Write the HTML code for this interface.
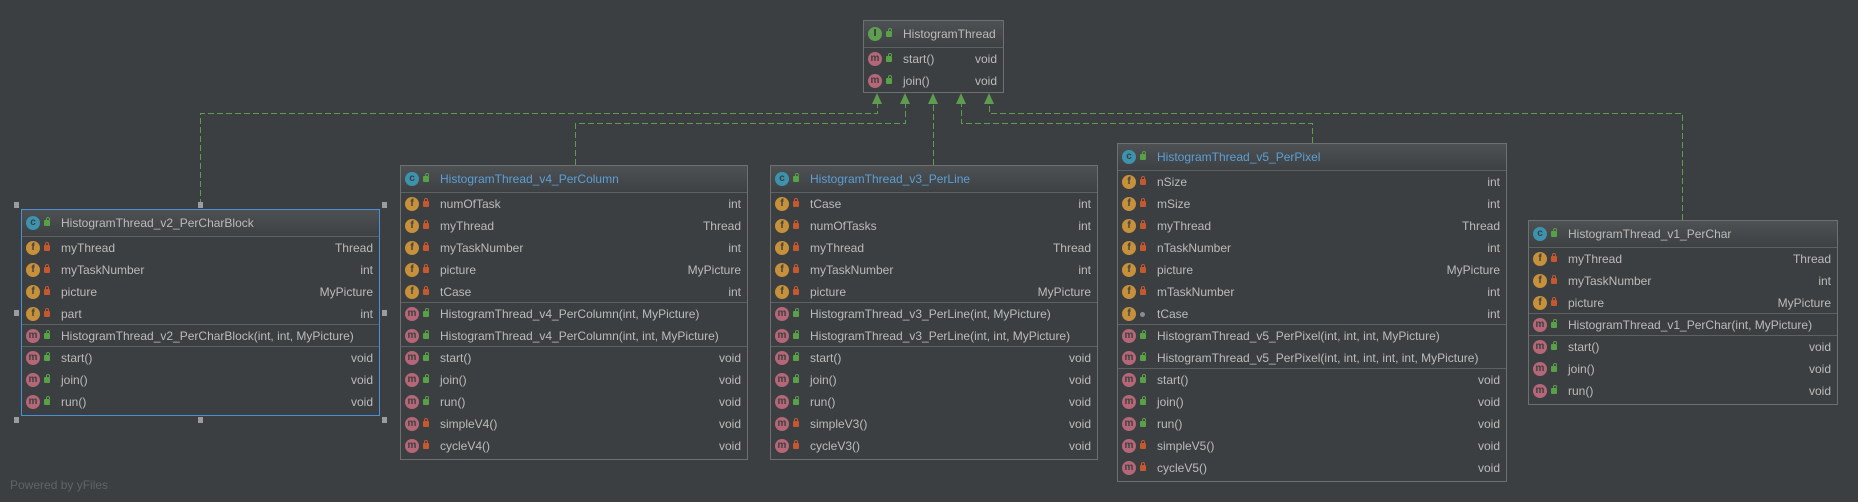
<!DOCTYPE html>
<html><head><meta charset="utf-8"><style>
*{margin:0;padding:0;box-sizing:border-box}
body{width:1858px;height:502px;background:#3c3f41;position:relative;overflow:hidden;font-family:"Liberation Sans",sans-serif;font-size:12px;color:#bbbbbb}
.b{position:absolute;border:1px solid #6d6f71;background:#3c3f41}
.b.sel{border-color:#4b8fd6}
.h{height:27px;line-height:26px;background:linear-gradient(#4e5153,#3e4143);border-bottom:1px solid #5e6062;position:relative;padding-left:39px;white-space:nowrap}
.h.bl{color:#5a9fd8}
.s{border-bottom:1px solid #5e6062}
.r{height:22px;line-height:22px;position:relative;padding-left:39px;padding-right:6px;white-space:nowrap}
.r span{position:absolute;right:6px;top:0}
.ic{position:absolute;left:4px;top:4px;width:14px;height:14px;border-radius:50%;font-size:10px;line-height:14px;text-align:center;color:#3c3f41;font-weight:bold}
.h .ic{top:6px;left:4px}
.f{background:#c6913a}.m{background:#b56777}.c{background:#3d93ad}.i{background:#5f9d52;color:#2b2b2b}
.lk{position:absolute;left:22px;top:8px;width:6px;height:6px;border-radius:1px}
.h .lk{top:10px}
.lk::before{content:"";position:absolute;left:1px;top:-3px;width:2px;height:2px;border:1px solid;border-bottom:none;border-radius:2px 2px 0 0}
.pu{background:#58a146}.pu::before{border-color:#58a146;left:2px}
.pr{background:#c5582f}.pr::before{border-color:#c5582f}
.pk{background:#8a8d90;border-radius:50%;width:5px;height:5px;top:9px}.pk::before{display:none}
.hd{position:absolute;width:5px;height:6px;background:#9a9c9e}
.t{position:absolute;background:none;width:0;height:0;border-left:5px solid transparent;border-right:5px solid transparent;border-bottom:11px solid #5f9c4f}
</style></head><body>
<svg width="1858" height="502" style="position:absolute;left:0;top:0">
<g stroke="#5f9c4f" stroke-width="1" fill="none" stroke-dasharray="6,3">
<path d="M200.5 205 V113.5 H877.5 V104"/>
<path d="M575.5 165 V123.5 H905.5 V104"/>
<path d="M933.5 165 V104"/>
<path d="M1312.5 143 V123.5 H961.5 V104"/>
<path d="M1682.5 220 V113.5 H989.5 V104"/>
</g></svg>
<div class="t" style="left:872px;top:93px"></div>
<div class="t" style="left:900px;top:93px"></div>
<div class="t" style="left:928px;top:93px"></div>
<div class="t" style="left:956px;top:93px"></div>
<div class="t" style="left:984px;top:93px"></div>

<div class="b" style="left:863px;top:20px;width:141px;height:73px">
<div class="h"><b class="ic i">I</b><i class="lk pu"></i>HistogramThread</div>
<div class="r"><b class="ic m">m</b><i class="lk pu"></i>start()<span>void</span></div>
<div class="r"><b class="ic m">m</b><i class="lk pu"></i>join()<span>void</span></div>
</div>

<div class="b sel" style="left:21px;top:209px;width:359px;height:207px">
<div class="h"><b class="ic c">c</b><i class="lk pu"></i>HistogramThread_v2_PerCharBlock</div>
<div class="r"><b class="ic f">f</b><i class="lk pr"></i>myThread<span>Thread</span></div>
<div class="r"><b class="ic f">f</b><i class="lk pr"></i>myTaskNumber<span>int</span></div>
<div class="r"><b class="ic f">f</b><i class="lk pr"></i>picture<span>MyPicture</span></div>
<div class="r s"><b class="ic f">f</b><i class="lk pr"></i>part<span>int</span></div>
<div class="r s"><b class="ic m">m</b><i class="lk pu"></i>HistogramThread_v2_PerCharBlock(int, int, MyPicture)</div>
<div class="r"><b class="ic m">m</b><i class="lk pu"></i>start()<span>void</span></div>
<div class="r"><b class="ic m">m</b><i class="lk pu"></i>join()<span>void</span></div>
<div class="r"><b class="ic m">m</b><i class="lk pu"></i>run()<span>void</span></div>
</div>
<div class="hd" style="left:14px;top:202px"></div><div class="hd" style="left:198px;top:202px"></div><div class="hd" style="left:382px;top:202px"></div>
<div class="hd" style="left:14px;top:310px"></div><div class="hd" style="left:382px;top:310px"></div>
<div class="hd" style="left:14px;top:417px"></div><div class="hd" style="left:198px;top:417px"></div><div class="hd" style="left:382px;top:417px"></div>

<div class="b" style="left:400px;top:165px;width:348px;height:295px">
<div class="h bl"><b class="ic c">c</b><i class="lk pu"></i>HistogramThread_v4_PerColumn</div>
<div class="r"><b class="ic f">f</b><i class="lk pr"></i>numOfTask<span>int</span></div>
<div class="r"><b class="ic f">f</b><i class="lk pr"></i>myThread<span>Thread</span></div>
<div class="r"><b class="ic f">f</b><i class="lk pr"></i>myTaskNumber<span>int</span></div>
<div class="r"><b class="ic f">f</b><i class="lk pr"></i>picture<span>MyPicture</span></div>
<div class="r s"><b class="ic f">f</b><i class="lk pr"></i>tCase<span>int</span></div>
<div class="r"><b class="ic m">m</b><i class="lk pu"></i>HistogramThread_v4_PerColumn(int, MyPicture)</div>
<div class="r s"><b class="ic m">m</b><i class="lk pu"></i>HistogramThread_v4_PerColumn(int, int, MyPicture)</div>
<div class="r"><b class="ic m">m</b><i class="lk pu"></i>start()<span>void</span></div>
<div class="r"><b class="ic m">m</b><i class="lk pu"></i>join()<span>void</span></div>
<div class="r"><b class="ic m">m</b><i class="lk pu"></i>run()<span>void</span></div>
<div class="r"><b class="ic m">m</b><i class="lk pr"></i>simpleV4()<span>void</span></div>
<div class="r"><b class="ic m">m</b><i class="lk pr"></i>cycleV4()<span>void</span></div>
</div>

<div class="b" style="left:770px;top:165px;width:328px;height:295px">
<div class="h bl"><b class="ic c">c</b><i class="lk pu"></i>HistogramThread_v3_PerLine</div>
<div class="r"><b class="ic f">f</b><i class="lk pr"></i>tCase<span>int</span></div>
<div class="r"><b class="ic f">f</b><i class="lk pr"></i>numOfTasks<span>int</span></div>
<div class="r"><b class="ic f">f</b><i class="lk pr"></i>myThread<span>Thread</span></div>
<div class="r"><b class="ic f">f</b><i class="lk pr"></i>myTaskNumber<span>int</span></div>
<div class="r s"><b class="ic f">f</b><i class="lk pr"></i>picture<span>MyPicture</span></div>
<div class="r"><b class="ic m">m</b><i class="lk pu"></i>HistogramThread_v3_PerLine(int, MyPicture)</div>
<div class="r s"><b class="ic m">m</b><i class="lk pu"></i>HistogramThread_v3_PerLine(int, int, MyPicture)</div>
<div class="r"><b class="ic m">m</b><i class="lk pu"></i>start()<span>void</span></div>
<div class="r"><b class="ic m">m</b><i class="lk pu"></i>join()<span>void</span></div>
<div class="r"><b class="ic m">m</b><i class="lk pu"></i>run()<span>void</span></div>
<div class="r"><b class="ic m">m</b><i class="lk pr"></i>simpleV3()<span>void</span></div>
<div class="r"><b class="ic m">m</b><i class="lk pr"></i>cycleV3()<span>void</span></div>
</div>

<div class="b" style="left:1117px;top:143px;width:390px;height:339px">
<div class="h bl"><b class="ic c">c</b><i class="lk pu"></i>HistogramThread_v5_PerPixel</div>
<div class="r"><b class="ic f">f</b><i class="lk pr"></i>nSize<span>int</span></div>
<div class="r"><b class="ic f">f</b><i class="lk pr"></i>mSize<span>int</span></div>
<div class="r"><b class="ic f">f</b><i class="lk pr"></i>myThread<span>Thread</span></div>
<div class="r"><b class="ic f">f</b><i class="lk pr"></i>nTaskNumber<span>int</span></div>
<div class="r"><b class="ic f">f</b><i class="lk pr"></i>picture<span>MyPicture</span></div>
<div class="r"><b class="ic f">f</b><i class="lk pr"></i>mTaskNumber<span>int</span></div>
<div class="r s"><b class="ic f">f</b><i class="lk pk"></i>tCase<span>int</span></div>
<div class="r"><b class="ic m">m</b><i class="lk pu"></i>HistogramThread_v5_PerPixel(int, int, int, MyPicture)</div>
<div class="r s"><b class="ic m">m</b><i class="lk pu"></i>HistogramThread_v5_PerPixel(int, int, int, int, int, MyPicture)</div>
<div class="r"><b class="ic m">m</b><i class="lk pu"></i>start()<span>void</span></div>
<div class="r"><b class="ic m">m</b><i class="lk pu"></i>join()<span>void</span></div>
<div class="r"><b class="ic m">m</b><i class="lk pu"></i>run()<span>void</span></div>
<div class="r"><b class="ic m">m</b><i class="lk pr"></i>simpleV5()<span>void</span></div>
<div class="r"><b class="ic m">m</b><i class="lk pr"></i>cycleV5()<span>void</span></div>
</div>

<div class="b" style="left:1528px;top:220px;width:310px;height:185px">
<div class="h"><b class="ic c">c</b><i class="lk pu"></i>HistogramThread_v1_PerChar</div>
<div class="r"><b class="ic f">f</b><i class="lk pr"></i>myThread<span>Thread</span></div>
<div class="r"><b class="ic f">f</b><i class="lk pr"></i>myTaskNumber<span>int</span></div>
<div class="r s"><b class="ic f">f</b><i class="lk pr"></i>picture<span>MyPicture</span></div>
<div class="r s"><b class="ic m">m</b><i class="lk pu"></i>HistogramThread_v1_PerChar(int, MyPicture)</div>
<div class="r"><b class="ic m">m</b><i class="lk pu"></i>start()<span>void</span></div>
<div class="r"><b class="ic m">m</b><i class="lk pu"></i>join()<span>void</span></div>
<div class="r"><b class="ic m">m</b><i class="lk pu"></i>run()<span>void</span></div>
</div>

<div style="position:absolute;left:10px;top:478px;color:#616467;font-size:12px">Powered by yFiles</div>
</body></html>
